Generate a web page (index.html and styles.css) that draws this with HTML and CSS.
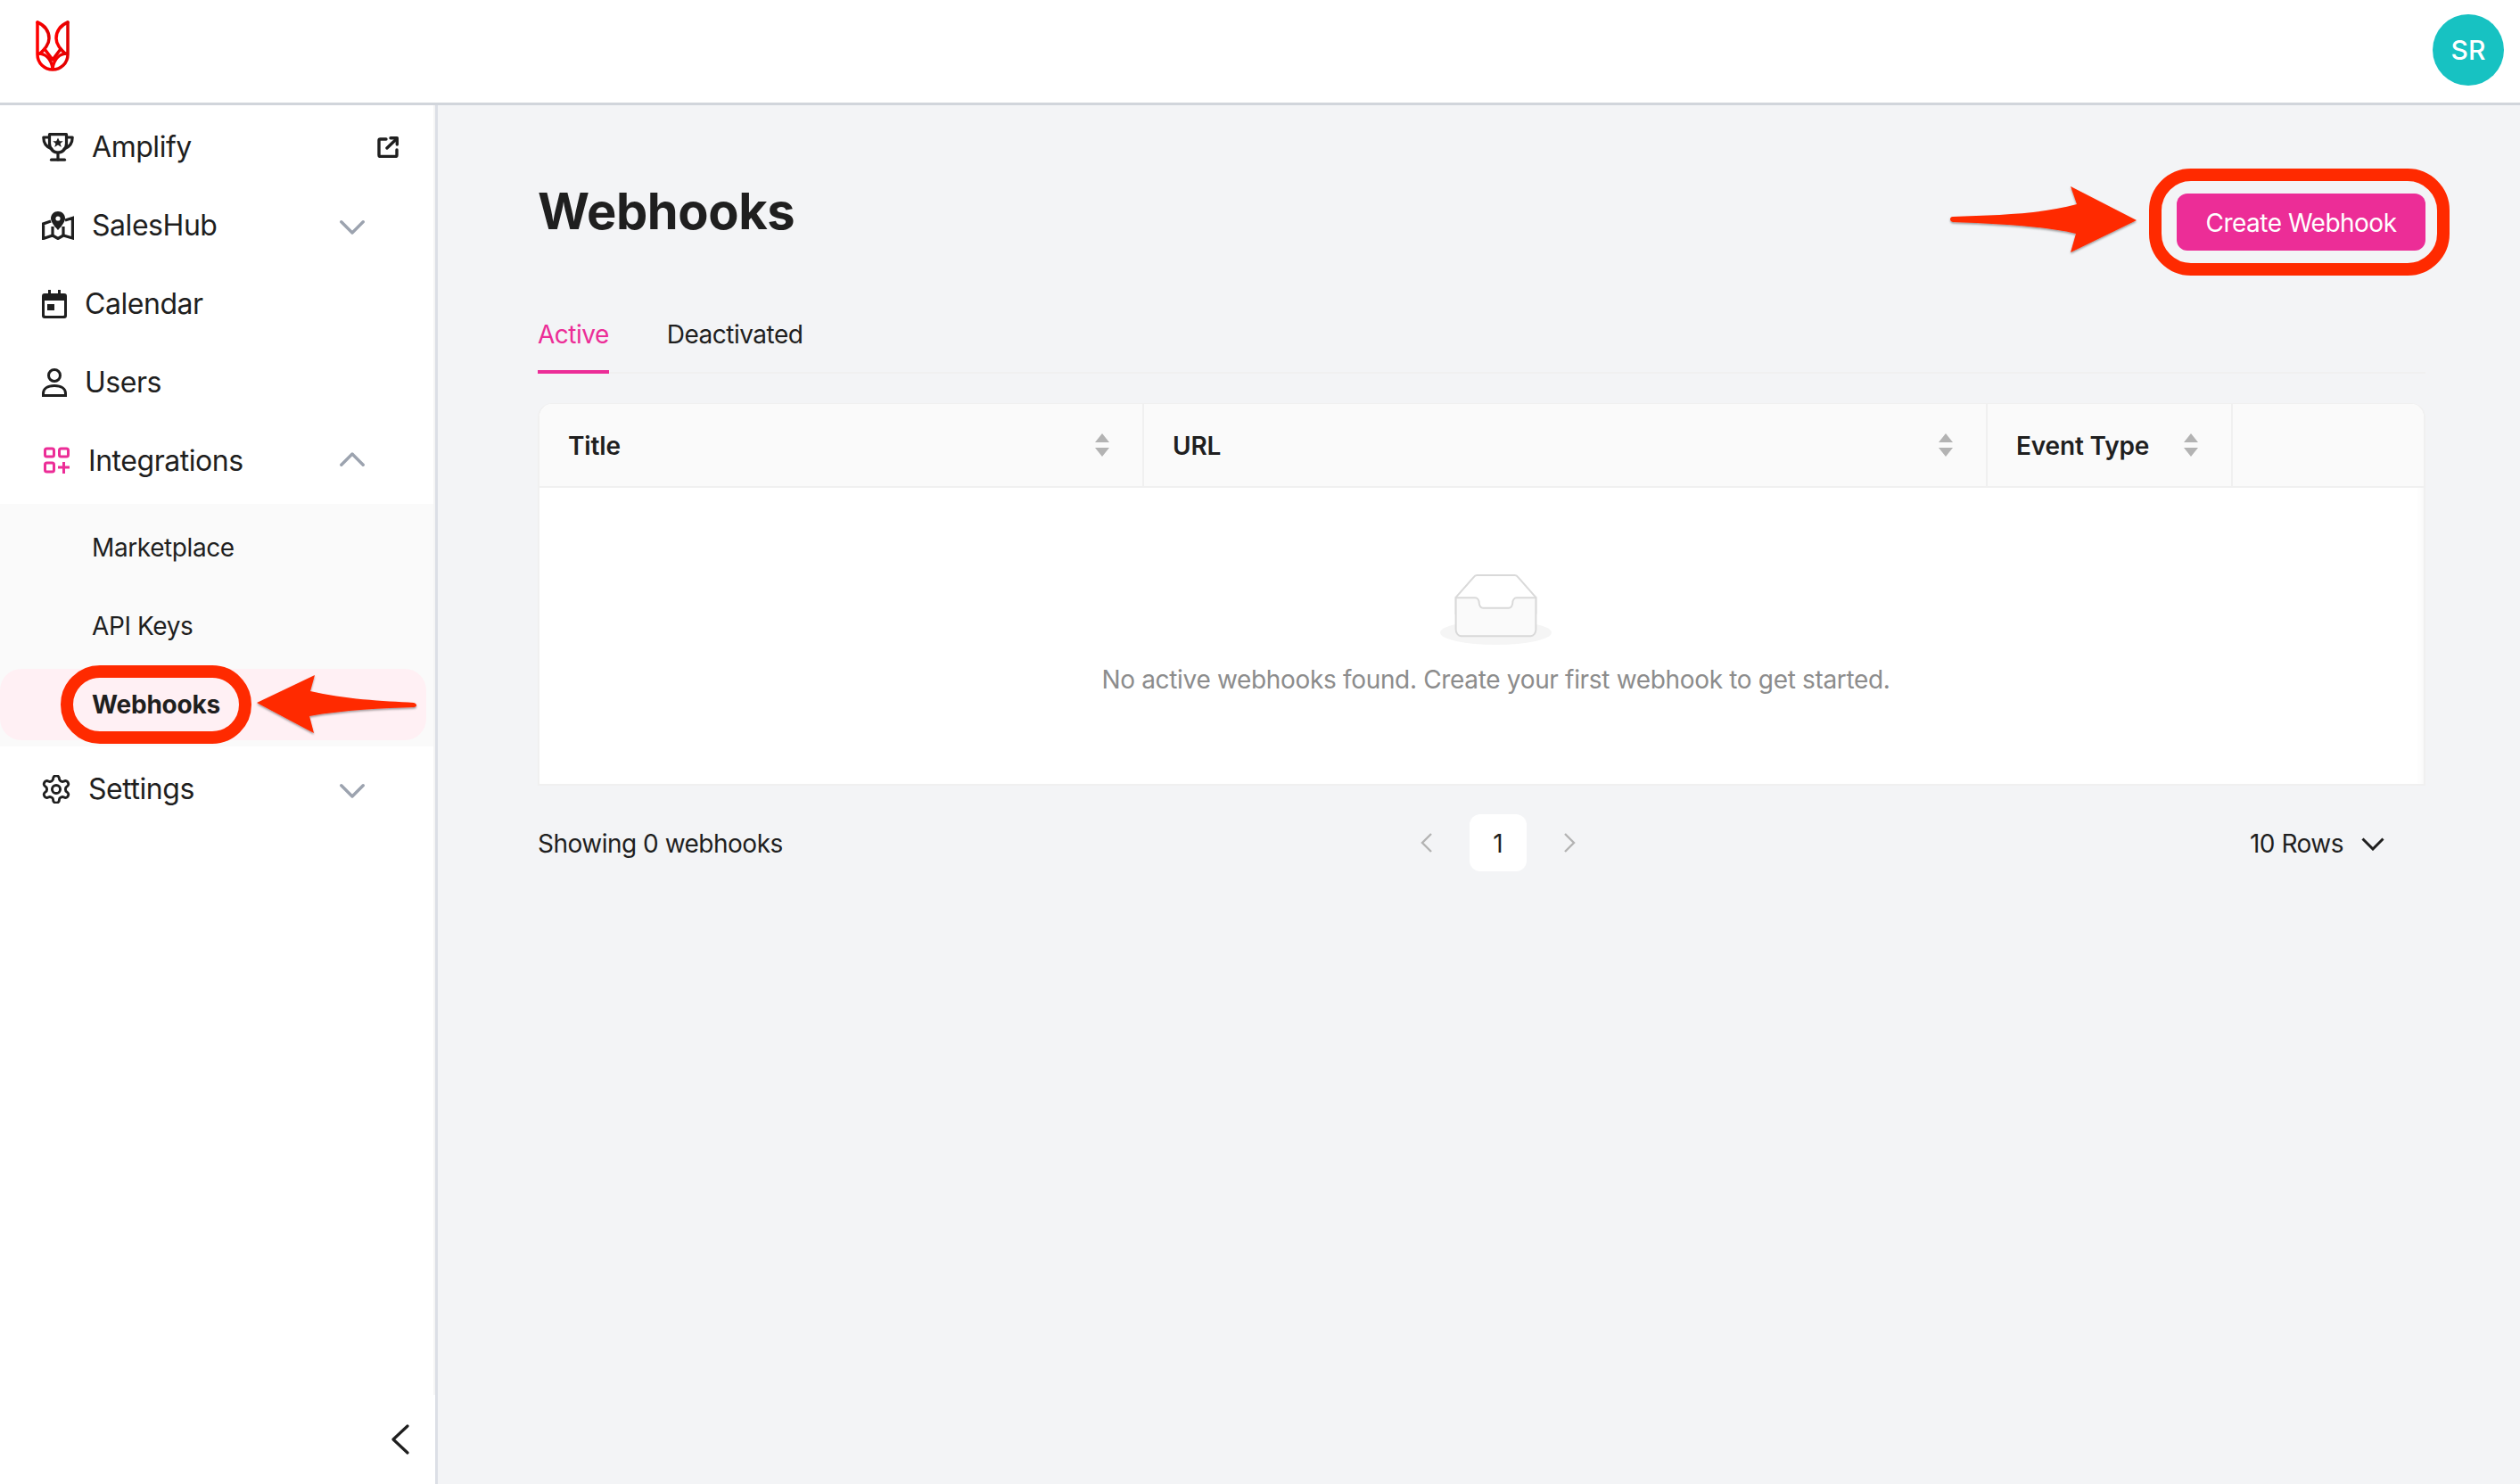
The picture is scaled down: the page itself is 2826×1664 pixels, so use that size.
FILE: index.html
```html
<!DOCTYPE html>
<html lang="en">
<head>
<meta charset="utf-8">
<title>Webhooks</title>
<link rel="stylesheet" href="styles.css">
</head>
<body>
<div class="app">
  <header class="topbar">
    <svg class="logo" viewBox="38 22 42 60" fill="none" stroke="url(#lg)" stroke-width="3.500" stroke-linecap="round" stroke-linejoin="round">
      <defs><linearGradient id="lg" x1="0" y1="0" x2="1" y2="0"><stop offset="0" stop-color="#f00"/><stop offset="1" stop-color="#e00000"/></linearGradient></defs>
      <path d="M42 25V61C42 71 50 78 59 78C68 78 76 71 76 61V25"/>
      <path d="M42 25C50 28 55 35 55 43C55 50 50 55 45 60"/>
      <path d="M76 25C68 28 63 35 63 43C63 50 68 55 73 60"/>
      <path d="M50 55L59 67L68 55"/>
      <path d="M59 67V78"/>
      <path d="M43 60C51 60 57 66 59 76"/>
      <path d="M75 60C67 60 61 66 59 76"/>
    </svg>
    <div class="avatar">SR</div>
  </header>
  <div class="body">
    <aside class="sidebar">
      <nav class="menu">
        <div class="item">
          <svg class="ic ic36" viewBox="0 0 36 32" fill="none" stroke="#1f1f1f" stroke-width="3.200" stroke-linejoin="round" stroke-linecap="round">
            <path d="M8.500 1.700H27.500V12C27.500 18 23 22 18 22C13 22 8.500 18 8.500 12Z"/><path d="M8.500 5H1.800C1.800 11 5 16 11 18"/><path d="M27.500 5H34.200C34.200 11 31 16 25 18"/><path d="M18 22V30"/><path d="M10.500 30.200H25.500"/>
            <path d="M18 5.500l1.800 3.800h4l-3.200 2.600 1.200 4-3.800-2.300-3.800 2.300 1.200-4-3.200-2.600h4z" fill="#1f1f1f" stroke="none"/>
          </svg>
          <span>Amplify</span>
          <svg class="ext" viewBox="0 0 24 24" fill="none" stroke="#1f1f1f" stroke-width="3.400" stroke-linecap="round" stroke-linejoin="round">
            <path d="M10 3H3.500A1.500 1.500 0 0 0 2 4.500V21A1.500 1.500 0 0 0 3.500 22.500H20.500A1.500 1.500 0 0 0 22 21V15"/><path d="M11 13L22 2.500"/><path d="M15 1.800H22.300V9"/>
          </svg>
        </div>
        <div class="item">
          <svg class="ic ic36" viewBox="0 0 36 32" fill="none" stroke="#1f1f1f" stroke-width="3.200" stroke-linejoin="miter">
            <path d="M10 11L1.600 14V30.500L12 27L18 30.500L24 27L34.400 30V7.500L26 10"/><path d="M12 27V17"/><path d="M24 27V17"/>
            <path d="M18 0C13.500 0 10 3.500 10 8C10 13 18 21 18 21C18 21 26 13 26 8C26 3.500 22.500 0 18 0Z" fill="#1f1f1f" stroke="none"/><circle cx="18" cy="8" r="2.600" fill="#fff" stroke="none"/>
          </svg>
          <span>SalesHub</span>
          <svg class="chev down" viewBox="0 0 28 16"><path d="M1.800 1.800L14 14L26.200 1.800"/></svg>
        </div>
        <div class="item">
          <svg class="ic ic28" viewBox="0 0 28 32">
            <path d="M7 0h3v4H18V0h3v4h4a3 3 0 0 1 3 3v22a3 3 0 0 1-3 3H3a3 3 0 0 1-3-3V7a3 3 0 0 1 3-3h4zM3 12V28a1 1 0 0 0 1 1H24a1 1 0 0 0 1-1V12z" fill="#1f1f1f" fill-rule="evenodd"/><rect x="6" y="16" width="8" height="7" fill="#1f1f1f"/>
          </svg>
          <span>Calendar</span>
        </div>
        <div class="item">
          <svg class="ic ic28" viewBox="0 0 28 32" fill="none" stroke="#1f1f1f" stroke-width="3">
            <circle cx="14" cy="8" r="6.500"/><path d="M1.500 30.500V28C1.500 23 6 19.500 14 19.500C22 19.500 26.500 23 26.500 28V30.500H1.500Z"/>
          </svg>
          <span>Users</span>
        </div>
        <div class="item">
          <svg class="ic ic32" viewBox="0 0 32 32" fill="none" stroke="#ec2d97" stroke-width="3">
            <rect x="3.500" y="2" width="10" height="9" rx="2"/><rect x="19.500" y="2" width="10" height="9" rx="2"/><rect x="3.500" y="18" width="10" height="10" rx="2"/><path d="M18 23H31M24.500 17V30"/>
          </svg>
          <span>Integrations</span>
          <svg class="chev up" viewBox="0 0 28 16"><path d="M1.800 14.200L14 2L26.200 14.200"/></svg>
        </div>
        <div class="submenu">
          <div class="subitem">Marketplace</div>
          <div class="subitem">API Keys</div>
          <div class="subitem active">Webhooks</div>
        </div>
        <div class="item">
          <svg class="ic ic32" viewBox="2.500 1.500 19 21" fill="none" stroke="#1f1f1f" stroke-width="1.900">
            <path d="M12.220 2h-.44a2 2 0 0 0-2 2v.18a2 2 0 0 1-1 1.730l-.43.25a2 2 0 0 1-2 0l-.15-.08a2 2 0 0 0-2.730.730l-.22.38a2 2 0 0 0 .730 2.730l.15.1a2 2 0 0 1 1 1.720v.51a2 2 0 0 1-1 1.740l-.15.09a2 2 0 0 0-.730 2.730l.22.38a2 2 0 0 0 2.730.730l.15-.08a2 2 0 0 1 2 0l.43.25a2 2 0 0 1 1 1.730V20a2 2 0 0 0 2 2h.44a2 2 0 0 0 2-2v-.18a2 2 0 0 1 1-1.730l.43-.25a2 2 0 0 1 2 0l.15.08a2 2 0 0 0 2.730-.730l.22-.39a2 2 0 0 0-.730-2.730l-.15-.08a2 2 0 0 1-1-1.740v-.5a2 2 0 0 1 1-1.740l.15-.09a2 2 0 0 0 .730-2.730l-.22-.38a2 2 0 0 0-2.730-.730l-.15.08a2 2 0 0 1-2 0l-.43-.25a2 2 0 0 1-1-1.730V4a2 2 0 0 0-2-2z"/><circle cx="12" cy="12" r="3"/>
          </svg>
          <span>Settings</span>
          <svg class="chev down" viewBox="0 0 28 16"><path d="M1.800 1.800L14 14L26.200 1.800"/></svg>
        </div>
      </nav>
      <div class="collapse">
        <svg class="collapse-ic" viewBox="0 0 20 34" fill="none" stroke="#1f1f1f" stroke-width="3.200" stroke-linecap="round" stroke-linejoin="round"><path d="M18 2L2 17L18 32"/></svg>
      </div>
    </aside>
    <main class="main">
      <div class="title-row">
        <h1 class="title">Webhooks</h1>
        <button class="primary">Create Webhook</button>
      </div>
      <div class="tabs">
        <div class="tab on">Active</div>
        <div class="tab">Deactivated</div>
      </div>
      <section class="table">
        <div class="thead">
          <div class="th"><span>Title</span><svg class="sort" viewBox="0 0 16 26"><path d="M8 0L16 10H0Z M8 26L0 16H16Z"/></svg></div>
          <div class="th"><span>URL</span><svg class="sort" viewBox="0 0 16 26"><path d="M8 0L16 10H0Z M8 26L0 16H16Z"/></svg></div>
          <div class="th"><span>Event Type</span><svg class="sort" viewBox="0 0 16 26"><path d="M8 0L16 10H0Z M8 26L0 16H16Z"/></svg></div>
          <div class="th"></div>
        </div>
        <div class="tbody">
          <svg class="empty-ic" viewBox="0 0 64 41"><g transform="translate(0 1)" fill="none" fill-rule="evenodd"><ellipse fill="#f5f5f5" cx="32" cy="33" rx="32" ry="7"/><g fill-rule="nonzero" stroke="#d9d9d9"><path d="M55 12.760L44.854 1.258C44.367.474 43.656 0 42.907 0H21.093c-.749 0-1.460.474-1.947 1.257L9 12.761V22h46v-9.240z"/><path d="M41.613 15.931c0-1.605.994-2.930 2.227-2.931H55v18.137C55 33.260 53.680 35 52.050 35h-40.100C10.320 35 9 33.259 9 31.137V13h11.160c1.233 0 2.227 1.323 2.227 2.928v.022c0 1.605 1.005 2.901 2.237 2.901h14.752c1.232 0 2.237-1.308 2.237-2.913v-.007z" fill="#fafafa"/></g></g></svg>
          <p class="empty-text">No active webhooks found. Create your first webhook to get started.</p>
        </div>
      </section>
      <div class="footer">
        <span class="count">Showing 0 webhooks</span>
        <div class="pager">
          <svg class="pg-ch" viewBox="0 0 14 24"><path d="M12 2L2 12L12 22"/></svg>
          <div class="page">1</div>
          <svg class="pg-ch" viewBox="0 0 14 24"><path d="M2 2L12 12L2 22"/></svg>
        </div>
        <div class="rows"><span>10 Rows</span><svg class="rows-ch" viewBox="0 0 26 15"><path d="M1.500 1.500L13 13L24.500 1.500"/></svg></div>
      </div>
    </main>
  </div>
  <svg class="marks" viewBox="0 0 2826 1664" fill="#ff2a00">
    <defs><filter id="sh" x="-10%" y="-10%" width="120%" height="130%"><feDropShadow dx="0" dy="1.500" stdDeviation="1" flood-color="#000" flood-opacity=".4"/></filter></defs>
    <rect class="ring" x="75" y="753" width="200" height="74" rx="37"/>
    <rect class="ring" x="2417" y="196" width="323" height="106" rx="40"/>
    <path filter="url(#sh)" d="M288 788L353 757L348 775C385 784 430 786 464 788C468 789 468 793 464 793C430 794 385 796 347 803L352 822Z"/>
    <path filter="url(#sh)" d="M2396 247L2322 209L2329 229C2290 240 2240 241 2190 243C2186 243 2186 248 2190 249C2240 251 2290 253 2328 262L2322 283Z"/>
  </svg>
</div>
</body>
</html>
```
FILE: styles.css
```css
* { box-sizing: border-box; }
html, body { margin: 0; height: 100%; }
body { font-family: Inter, "Liberation Sans", sans-serif; color: #1f1f1f; background: #f3f4f6; }
.app { position: relative; width: 2826px; height: 1664px; display: flex; flex-direction: column; overflow: hidden; }

.topbar { height: 118px; flex: none; background: #fff; border-bottom: 3px solid #d1d5db; display: flex; align-items: flex-start; justify-content: space-between; padding: 16px 18px 0 38px; }
.logo { width: 42px; height: 60px; margin-top: 6px; }
.avatar { width: 80px; height: 80px; border-radius: 50%; background: #17c2c2; color: #fff; font-size: 30px; font-weight: 500; display: flex; align-items: center; justify-content: center; }

.body { flex: 1; display: flex; min-height: 0; }
.sidebar { width: 491px; flex: none; background: #fff; border-right: 3px solid #dcdfe6; display: flex; flex-direction: column; justify-content: space-between; }
.menu { padding-top: 3px; border-right: 2px solid #f5f5f5; flex: 1; }
.item { height: 88px; display: flex; align-items: center; gap: 20px; padding-left: 47px; font-size: 32px; line-height: 44px; letter-spacing: -.45px; }
.ic { flex: none; height: 32px; }
.ic36 { width: 36px; }
.ic32 { width: 32px; }
.ic28 { width: 28px; }
.ext { width: 24px; height: 24px; margin-left: auto; margin-right: 39px; }
.chev { width: 28px; height: 16px; margin-left: auto; margin-right: 77px; fill: none; stroke: #9ca3af; stroke-width: 3.400; stroke-linecap: round; stroke-linejoin: round; }
.chev.down { margin-top: 4px; }
.chev.up { margin-bottom: 4px; }

.submenu { margin: 4px 0; padding: 5px 0 3px; background: #fafafa; }
.subitem { height: 88px; display: flex; align-items: center; padding-left: 103px; font-size: 28px; letter-spacing: -.4px; margin-right: 8px; }
.subitem.active { font-weight: 700; letter-spacing: -.2px; background: #fff0f4; border-radius: 24px; height: 80px; margin: 4px 8px 4px 0; }

.collapse { height: 100px; flex: none; display: flex; align-items: center; justify-content: flex-end; padding: 0 29px 0 0; }
.collapse-ic { width: 20px; height: 34px; }

.main { flex: 1; min-width: 0; padding: 75px 106px 0 112px; }
.title-row { display: flex; justify-content: space-between; align-items: flex-start; }
.title { margin: 0; font-size: 56px; line-height: 88px; font-weight: 700; letter-spacing: -.4px; color: #1f1f1f; }
.primary { margin-top: 24px; width: 279px; height: 64px; border: 0; border-radius: 12px; padding: 2px 0 0; background: #ec2d97; color: #fff; font: 400 28px/44px Inter, "Liberation Sans", sans-serif; letter-spacing: -.5px; }

.tabs { margin-top: 49px; display: flex; gap: 65px; border-bottom: 2px solid #f0f0f0; height: 89px; }
.tab { font-size: 28px; line-height: 44px; padding-top: 23px; height: 89px; letter-spacing: -.5px; }
.tab.on { color: #ec2d97; border-bottom: 4px solid #ec2d97; }

.table { margin-top: 33px; border-radius: 16px 16px 0 0; background: #fff; border: 2px solid #f0f0f0; border-top-width: 1px; overflow: hidden; }
.thead { display: grid; grid-template-columns: 678px 946px 275px 1fr; height: 94px; background: #fafafa; border-bottom: 2px solid #f0f0f0; }
.th { display: flex; align-items: center; justify-content: space-between; padding: 2px 37px 0 32px; font-size: 28px; font-weight: 600; letter-spacing: -.15px; border-right: 2px solid #f0f0f0; }
.th:last-child { border-right: 0; }
.sort { width: 16px; height: 26px; margin-top: -2px; fill: #b3b3b3; }
.tbody { padding: 96px 0 95px 32px; display: flex; flex-direction: column; align-items: center; box-shadow: inset -10px 0 8px -8px rgba(0, 0, 0, .04); }
.empty-ic { width: 125px; height: 80px; }
.empty-text { margin: 17px 0 0; font-size: 28px; line-height: 44px; letter-spacing: -.33px; color: #8c8c8c; }

.footer { margin-top: 32px; height: 64px; display: flex; align-items: center; font-size: 28px; letter-spacing: -.5px; }
.count { flex: none; padding-top: 2px; }
.pager { display: flex; align-items: center; gap: 41px; margin-left: 715px; }
.pg-ch { width: 14px; height: 24px; fill: none; stroke: #b3b3b3; stroke-width: 2.400; }
.page { width: 64px; height: 64px; padding-top: 2px; background: #fff; border-radius: 12px; display: flex; align-items: center; justify-content: center; }
.rows { margin-left: auto; margin-right: 46px; padding-top: 2px; display: flex; align-items: center; gap: 20px; }
.rows-ch { width: 26px; height: 15px; fill: none; stroke: #1f1f1f; stroke-width: 3; }

.marks { position: absolute; inset: 0; width: 2826px; height: 1664px; pointer-events: none; }
.ring { fill: none; stroke: #ff2a00; stroke-width: 14; }
```
